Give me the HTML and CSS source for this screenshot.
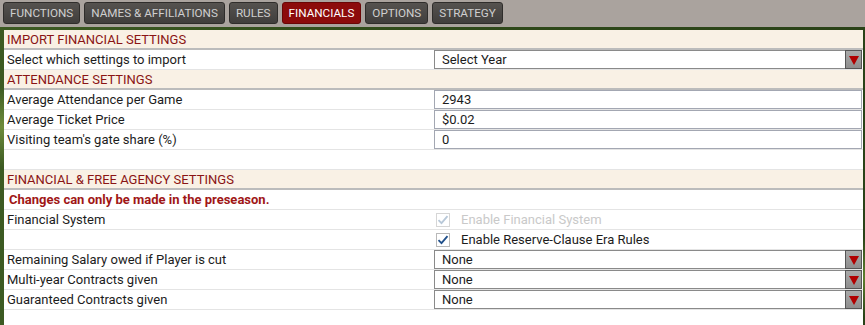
FILE: index.html
```html
<!DOCTYPE html>
<html lang="en">
<head>
    <meta charset="UTF-8">
    <title>Financials</title>
    <link rel="stylesheet" href="styles.css">
</head>
<body>
    <div class="tabs">
        <div class="tab">FUNCTIONS</div>
        <div class="tab">NAMES &amp; AFFILIATIONS</div>
        <div class="tab">RULES</div>
        <div class="tab active">FINANCIALS</div>
        <div class="tab">OPTIONS</div>
        <div class="tab">STRATEGY</div>
    </div>
    <div class="field">
        <div class="panel">
            <div class="row header">IMPORT FINANCIAL SETTINGS</div>
            <div class="row">
                <div class="label">Select which settings to import</div>
                <div class="control"><div class="select">Select Year<span class="arrow"></span></div></div>
            </div>
            <div class="row header">ATTENDANCE SETTINGS</div>
            <div class="row">
                <div class="label">Average Attendance per Game</div>
                <div class="control"><div class="input">2943</div></div>
            </div>
            <div class="row">
                <div class="label">Average Ticket Price</div>
                <div class="control"><div class="input">$0.02</div></div>
            </div>
            <div class="row">
                <div class="label">Visiting team's gate share (%)</div>
                <div class="control"><div class="input">0</div></div>
            </div>
            <div class="row"></div>
            <div class="row header">FINANCIAL &amp; FREE AGENCY SETTINGS</div>
            <div class="row warning">Changes can only be made in the preseason.</div>
            <div class="row">
                <div class="label">Financial System</div>
                <div class="control">
                    <label class="check disabled"><span class="box"><svg width="12" height="10" viewBox="0 0 12 10"><path d="M1.5 5.2 L4.5 8.2 L10.5 1.2" fill="none" stroke="currentColor" stroke-width="1.8"/></svg></span>Enable Financial System</label>
                </div>
            </div>
            <div class="row">
                <div class="label"></div>
                <div class="control">
                    <label class="check"><span class="box"><svg width="12" height="10" viewBox="0 0 12 10"><path d="M1.5 5.2 L4.5 8.2 L10.5 1.2" fill="none" stroke="currentColor" stroke-width="1.8"/></svg></span>Enable Reserve-Clause Era Rules</label>
                </div>
            </div>
            <div class="row">
                <div class="label">Remaining Salary owed if Player is cut</div>
                <div class="control"><div class="select">None<span class="arrow"></span></div></div>
            </div>
            <div class="row">
                <div class="label">Multi-year Contracts given</div>
                <div class="control"><div class="select">None<span class="arrow"></span></div></div>
            </div>
            <div class="row">
                <div class="label">Guaranteed Contracts given</div>
                <div class="control"><div class="select">None<span class="arrow"></span></div></div>
            </div>
        </div>
    </div>
</body>
</html>
```

FILE: styles.css
```css
body {
    margin: 0;
    padding: 0;
    width: 865px;
    height: 325px;
    overflow: hidden;
    font-family: Roboto, "Liberation Sans", sans-serif;
    font-size: 13px;
    color: #1c1c1c;
    background: #a9a29c;
}
.tabs {
    display: flex;
    gap: 4px;
    height: 27px;
    padding: 2px 0 0 3px;
    box-sizing: border-box;
    background: #aaa39e;
}
.tab {
    height: 22px;
    line-height: 21px;
    padding: 0 6px;
    color: #cfcfcf;
    font-size: 11.7px;
    background: linear-gradient(#55524f, #403e3c);
    border: 1px solid #2f2d2b;
    border-radius: 3px;
    box-sizing: border-box;
}
.tab.active {
    color: #fff;
    background: #8c0b0b;
    border-color: #6a0606;
}
.field {
    height: 298px;
    padding: 3px 2px 0 4px;
    background:
        radial-gradient(circle at 2px 100px, #6e8c3c 0, transparent 40px),
        radial-gradient(circle at 862px 250px, #5e7f2e 0, transparent 40px),
        linear-gradient(90deg, #3c5a22, #2f4a1a 50%, #2a4218);
}
.panel {
    background: #fff;
    height: 295px;
}
.row {
    display: flex;
    align-items: center;
    height: 20px;
    border-bottom: 1px solid #e4e4e4;
    box-sizing: border-box;
    padding-left: 3px;
}
.header {
    background: #f9f1e5;
    color: #8a1414;
    border-bottom: 2px solid #bcbcbc;
    height: 20px;
}
.warning {
    color: #a01616;
    font-weight: bold;
    padding-left: 5px;
}
.label {
    width: 427px;
    flex: none;
}
.control {
    flex: 1;
    padding-right: 1px;
}
.input, .select {
    position: relative;
    height: 19px;
    line-height: 17px;
    border: 1px solid #a3a7b2;
    box-sizing: border-box;
    padding-left: 7px;
    background: #fff;
}
.select {
    border-color: #8a8a8a;
}
.arrow {
    position: absolute;
    right: -1px;
    top: -1px;
    width: 17px;
    height: 19px;
    box-sizing: border-box;
    border: 1px solid #555;
    background: linear-gradient(#a9a9a9, #8e8e8e);
}
.arrow::after {
    content: "";
    position: absolute;
    left: 3px;
    top: 5px;
    border-left: 5px solid transparent;
    border-right: 5px solid transparent;
    border-top: 9px solid #b00000;
}
.check {
    display: flex;
    align-items: center;
    gap: 11px;
    padding-left: 2px;
}
.box {
    display: flex;
    align-items: center;
    justify-content: center;
    width: 14px;
    height: 14px;
    box-sizing: border-box;
    border: 1px solid #b9b9b9;
    color: #1f4f8a;
}
.check.disabled {
    color: #c9c9c9;
}
.check.disabled .box {
    color: #b8c8d8;
    border-color: #d6d6d6;
}
```
